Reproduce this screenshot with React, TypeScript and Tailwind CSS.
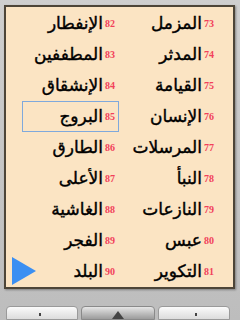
const left = [
  [82, "الإنفطار"],
  [83, "المطففين"],
  [84, "الإنشقاق"],
  [85, "البروج"],
  [86, "الطارق"],
  [87, "الأعلى"],
  [88, "الغاشية"],
  [89, "الفجر"],
  [90, "البلد"],
] as const;

const right = [
  [73, "المزمل"],
  [74, "المدثر"],
  [75, "القيامة"],
  [76, "الإنسان"],
  [77, "المرسلات"],
  [78, "النبأ"],
  [79, "النازعات"],
  [80, "عبس"],
  [81, "التكوير"],
] as const;

function Row({ num, name, selected }: { num: number; name: string; selected?: boolean }) {
  return (
    <div
      className={
        "h-[31px] flex items-center justify-end pr-[3px] " +
        (selected ? "border border-[#7fa9dc]" : "border border-transparent")
      }
    >
      <span
        dir="rtl"
        className="text-[17px] leading-none text-black [-webkit-text-stroke:0.4px_black]"
        style={{ fontFamily: '"DejaVu Sans", sans-serif' }}
      >
        {name}
      </span>
      <span
        className="ml-[2px] w-[10px] text-[10px] font-bold text-[#f2405a] leading-none"
        style={{ fontFamily: '"Liberation Serif", serif' }}
      >
        {num}
      </span>
    </div>
  );
}

export default function App() {
  return (
    <div className="w-[240px] h-[320px] bg-gradient-to-b from-[#cfcfcf] to-[#bdbdbd] flex flex-col overflow-hidden">
      {/* Surah list panel */}
      <div className="relative ml-[4px] mt-[5px] w-[231px] h-[289px] border-2 border-[#4d4538] bg-[#fbe4c3] shadow-[1px_1px_2px_rgba(0,0,0,0.35)]">
        <div className="flex pl-[16px] pt-[1px] gap-[2px]">
          <div className="w-[97px] flex flex-col">
            {left.map(([n, s]) => (
              <Row key={n} num={n} name={s} selected={n === 85} />
            ))}
          </div>
          <div className="w-[97px] flex flex-col">
            {right.map(([n, s]) => (
              <Row key={n} num={n} name={s} />
            ))}
          </div>
        </div>
        {/* next page arrow */}
        <svg className="absolute left-[6px] top-[250px]" width="26" height="28" viewBox="0 0 26 28">
          <polygon points="0,0 24,14 0,28" fill="#3b8ff2" />
        </svg>
      </div>

      {/* Soft keys */}
      <div className="flex gap-[3px] px-[6px] mt-[17px]">
        <div className="relative w-[72px] h-[14px] rounded-t-[4px] border border-[#9a9a9a] bg-gradient-to-b from-[#fbfbfb] to-[#dcdcdc]">
          <div className="absolute left-[32px] top-[6px] w-[2px] h-[3px] bg-[#444]" />
        </div>
        <div className="relative w-[74px] h-[14px] rounded-t-[4px] border border-[#8a8a8a] bg-gradient-to-b from-[#e6e6e6] to-[#9c9c9c] flex justify-center">
          <svg className="mt-[4px]" width="12" height="8" viewBox="0 0 12 8">
            <polygon points="6,0 12,8 0,8" fill="#444" />
          </svg>
        </div>
        <div className="relative w-[72px] h-[14px] rounded-t-[4px] border border-[#9a9a9a] bg-gradient-to-b from-[#fbfbfb] to-[#dcdcdc]">
          <div className="absolute left-[36px] top-[6px] w-[2px] h-[3px] bg-[#444]" />
        </div>
      </div>
    </div>
  );
}
